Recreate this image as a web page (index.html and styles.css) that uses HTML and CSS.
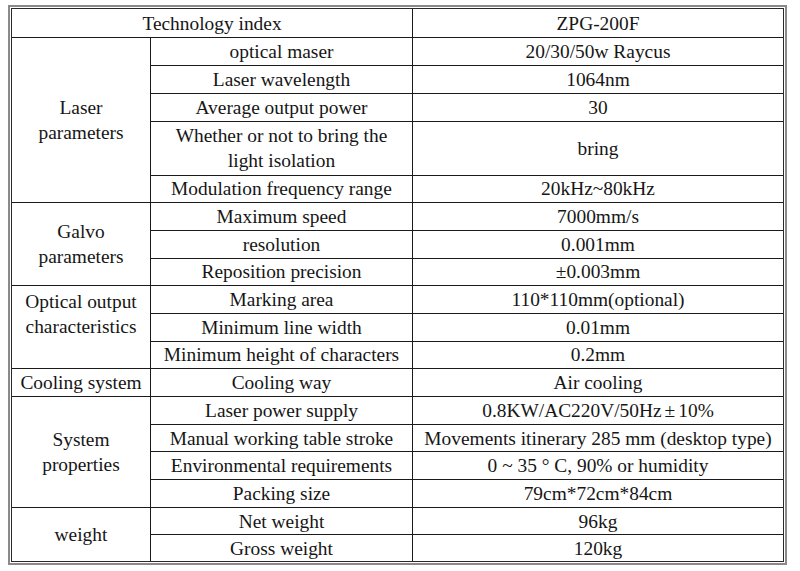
FILE: index.html
```html
<!DOCTYPE html>
<html lang="en">
<head>
<meta charset="utf-8">
<title>Technology index</title>
<link rel="stylesheet" href="styles.css">
</head>
<body>
<div class="frame">
  <div class="spec">
    <div class="cell head-left">Technology index</div>
    <div class="cell">ZPG-200F</div>

    <div class="cell group g5">Laser<br>parameters</div>
    <div class="cell">optical maser</div>
    <div class="cell">20/30/50w Raycus</div>
    <div class="cell">Laser wavelength</div>
    <div class="cell">1064nm</div>
    <div class="cell">Average output power</div>
    <div class="cell">30</div>
    <div class="cell">Whether or not to bring the<br>light isolation</div>
    <div class="cell">bring</div>
    <div class="cell">Modulation frequency range</div>
    <div class="cell">20kHz~80kHz</div>

    <div class="cell group g3">Galvo<br>parameters</div>
    <div class="cell">Maximum speed</div>
    <div class="cell">7000mm/s</div>
    <div class="cell">resolution</div>
    <div class="cell">0.001mm</div>
    <div class="cell">Reposition precision</div>
    <div class="cell">±0.003mm</div>

    <div class="cell group g3 top">Optical output<br>characteristics</div>
    <div class="cell">Marking area</div>
    <div class="cell">110*110mm(optional)</div>
    <div class="cell">Minimum line width</div>
    <div class="cell">0.01mm</div>
    <div class="cell">Minimum height of characters</div>
    <div class="cell">0.2mm</div>

    <div class="cell group">Cooling system</div>
    <div class="cell">Cooling way</div>
    <div class="cell">Air cooling</div>

    <div class="cell group g4">System<br>properties</div>
    <div class="cell">Laser power supply</div>
    <div class="cell">0.8KW/AC220V/50Hz<span class="pm">±</span>10%</div>
    <div class="cell">Manual working table stroke</div>
    <div class="cell">Movements itinerary 285 mm (desktop type)</div>
    <div class="cell">Environmental requirements</div>
    <div class="cell">0 ~ 35 ° C, 90% or humidity</div>
    <div class="cell">Packing size</div>
    <div class="cell">79cm*72cm*84cm</div>

    <div class="cell group g2">weight</div>
    <div class="cell">Net weight</div>
    <div class="cell">96kg</div>
    <div class="cell">Gross weight</div>
    <div class="cell">120kg</div>
  </div>
</div>
</body>
</html>
```

FILE: styles.css
```css
html, body {
  margin: 0;
  padding: 0;
  background: #ffffff;
}

body {
  padding: 5px 0 0 8px;
  font-family: "Liberation Serif", "Times New Roman", serif;
  font-size: 19.4px;
  color: #161616;
}

.frame {
  border: 2px solid #8a8a8a;
  padding: 1px;
  box-sizing: border-box;
  width: 779px;
  background: #fff;
}

.spec {
  display: grid;
  grid-template-columns: 138px 261px 370px;
  grid-template-rows: 28px 27px 27px 27px 52.5px repeat(13, 26.7px) 26px;
  gap: 1px;
  background: #1a1a1a;
  border: 1px solid #2a2a2a;
}

.cell {
  background: #ffffff;
  display: flex;
  align-items: center;
  justify-content: center;
  text-align: center;
  line-height: 25px;
  white-space: nowrap;
}

.head-left {
  grid-column: span 2;
}

.group.g5 { grid-row: span 5; }
.group.g4 { grid-row: span 4; }
.group.g3 { grid-row: span 3; }
.group.g2 { grid-row: span 2; }

.group.top {
  align-items: flex-start;
  padding-top: 3px;
}

.pm {
  margin: 0 3px;
}
```
